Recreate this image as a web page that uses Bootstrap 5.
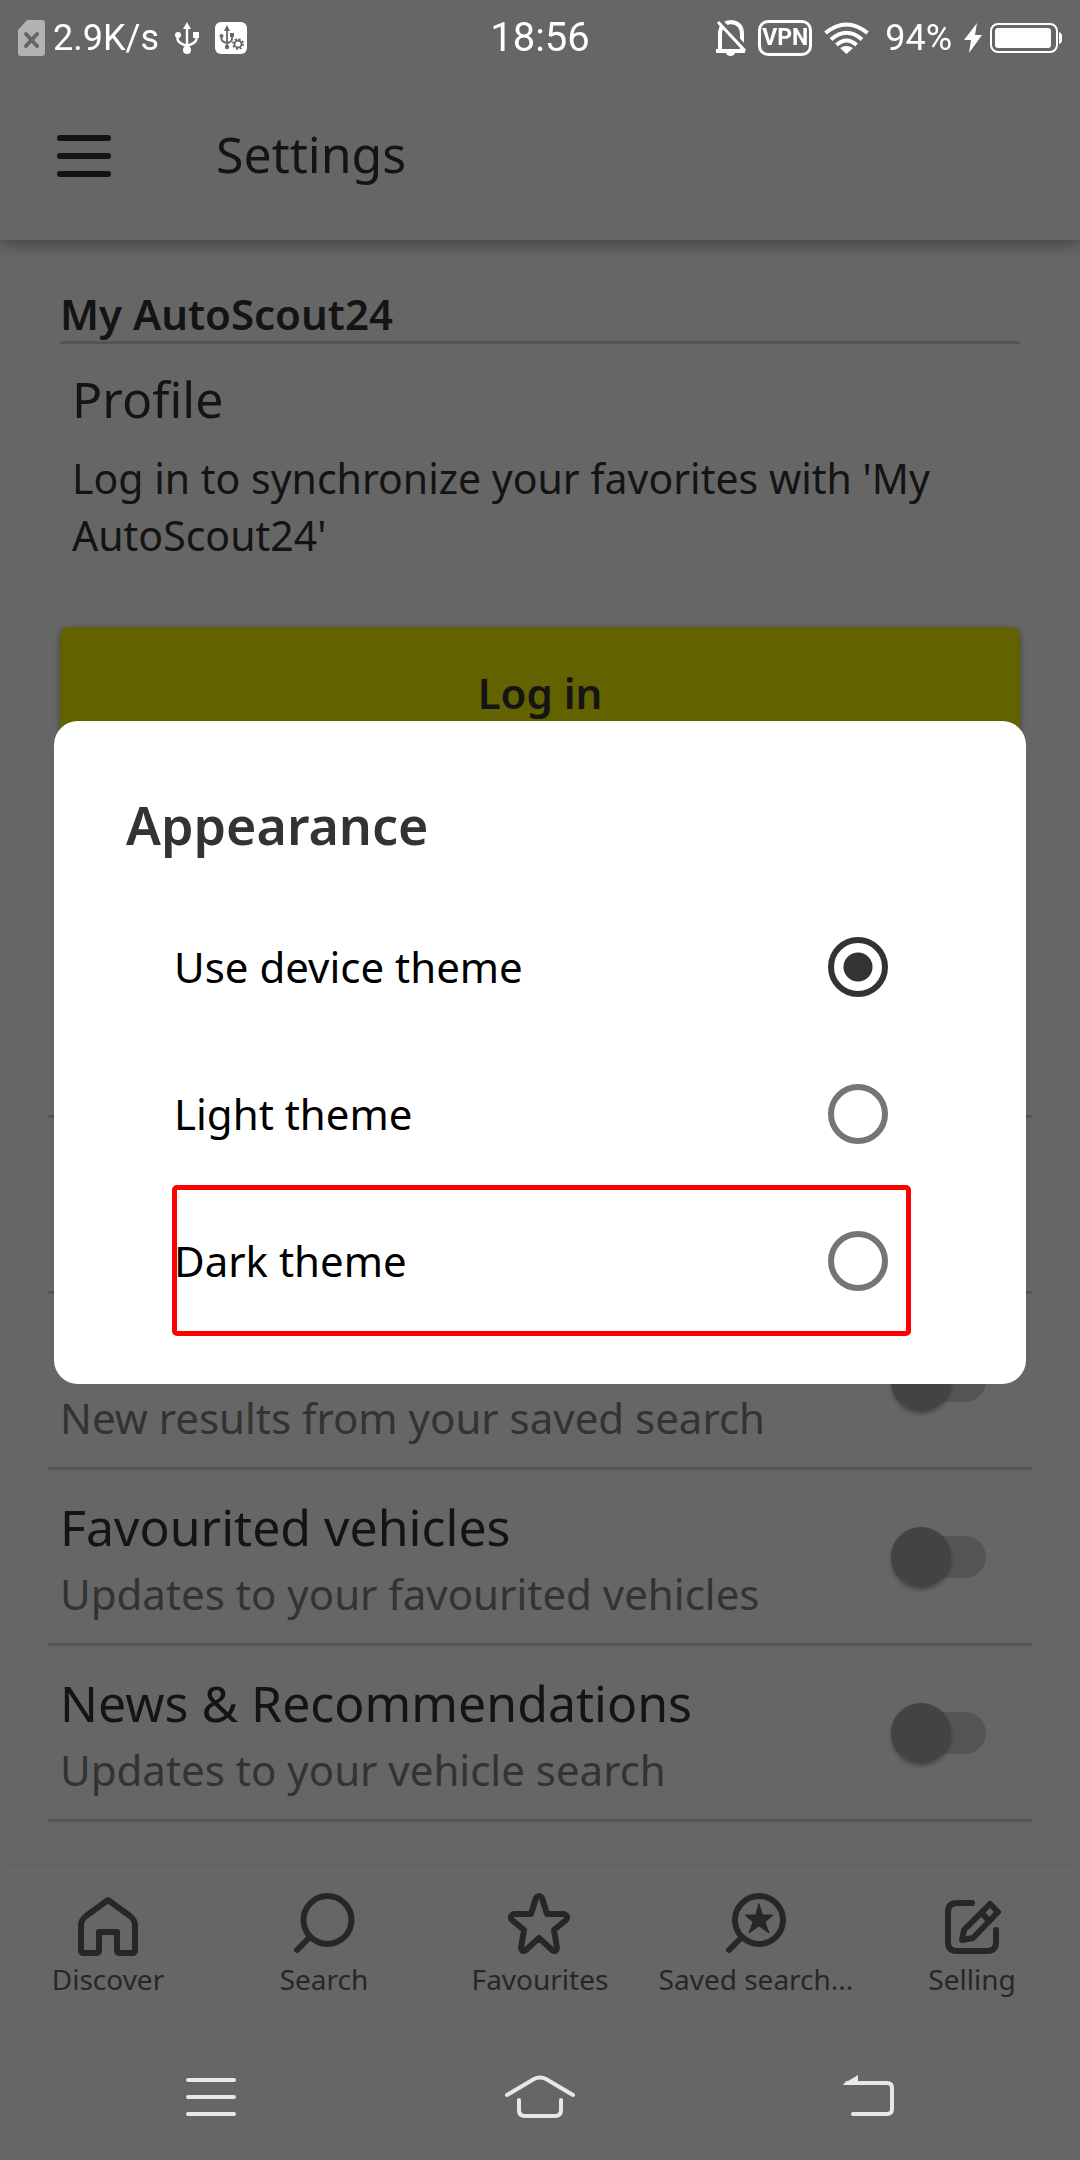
<!DOCTYPE html>
<html lang="en">
<head>
<meta charset="utf-8">
<meta name="viewport" content="width=device-width, initial-scale=1">
<title>Settings</title>
<link href="https://cdn.jsdelivr.net/npm/bootstrap@5.3.0/dist/css/bootstrap.min.css" rel="stylesheet">
<style>
  body { font-family: "Noto Sans", "Open Sans", sans-serif; font-size: 42px; line-height: 57px; color: #333; background: #fff; }
  svg { display: block; flex: none; }
  .modal-backdrop { --bs-backdrop-opacity: .6; opacity: .6; width: 100%; height: 100%; }

  /* system bars stay above the dimmed page */
  .sys { position: relative; z-index: 1060; color: #fff; font-family: Roboto, sans-serif; }
  .status { height: 76px; padding: 0 18px; font-size: 36px; line-height: 40px; }
  .clock { font-size: 40px; }
  .vpn { width: 54px; height: 36px; border: 3px solid #fff; border-radius: 10px; font-size: 23px; line-height: 30px; font-weight: 700; text-align: center; }
  .sysnav { height: 126px; padding: 0 186px; color: #e8e8e8; }
  .plain { background: none; border: 0; padding: 0; color: inherit; }

  .topbar { height: 164px; padding: 0 57px 4px; gap: 105px; box-shadow: 0 4px 16px rgba(0,0,0,.36); clip-path: inset(0 0 -24px 0); }
  .big { font-size: 50px; line-height: 68px; font-weight: 400; }
  .content-area { padding: 46px 60px 0; }
  .section-head { font-size: 42px; line-height: 55px; font-weight: 600; border-bottom: 3px solid #d5d5d5; }
  .profile { padding: 21px 12px 63px; }
  .profile p { margin-top: 17px; font-size: 41px; }
  .login { height: 135px; padding-bottom: 10px; background: #f5f500; color: #333; border: 0; border-radius: 9px; font-size: 42px; font-weight: 600; box-shadow: 0 2px 6px rgba(0,0,0,.4); }
  .options { margin: 353px -12px 0; border-bottom: 3px solid #d5d5d5; }
  .option { height: 176px; padding: 22px 46px 21px 12px; border-top: 3px solid #d5d5d5; }
  .option small { font-size: 42px; line-height: 57px; color: #808080; }
  .toggle { appearance: none; position: relative; flex: none; width: 95px; height: 60px; margin: 0; }
  .toggle::before { content: ""; position: absolute; inset: 9px 0 9px 9px; border-radius: 21px; background: #d5d5d5; }
  .toggle::after { content: ""; position: absolute; left: 0; top: 0; width: 60px; height: 60px; border-radius: 50%; background: #a8a8a8; box-shadow: 0 3px 4px rgba(0,0,0,.3); }

  .tabs { height: 168px; padding-top: 23px; font-size: 28px; line-height: 36px; box-shadow: 0 -2px 10px rgba(0,0,0,.06); clip-path: inset(-16px 0 0 0); background: #fff; }
  .tabs a { color: #626262; }

  .modal { padding: 0 54px 55px; }
  .sheet { border-radius: 24px; padding: 70px 117px 50px 72px; background: #fff; }
  .sheet h2 { font-size: 52px; line-height: 68px; font-weight: 600; color: #333; margin-bottom: 34px; }
  .choices { padding-left: 48px; }
  .choice { height: 147px; padding-right: 21px; color: #000; }
  .choice input { appearance: none; width: 60px; height: 60px; margin: 0; border: 6px solid #757575; border-radius: 50%; }
  .choice input:checked { border-color: #333; background: radial-gradient(circle, #333 14px, #fff 15px); }
  .marked { outline: 5px solid #f00; outline-offset: -3px; border-radius: 3px; }
</style>
</head>
<body class="d-flex flex-column min-vh-100">

<div class="sys status row g-0 align-items-center">
  <div class="col d-flex align-items-center">
    <svg width="27" height="36" viewBox="0 0 27 36"><path d="M9 0H24Q27 0 27 3V33Q27 36 24 36H3Q0 36 0 33V10Z" fill="#b2b2b2"/><path d="M8 14L19 26M19 14L8 26" stroke="#666" stroke-width="4" stroke-linecap="round"/></svg>
    <span class="ms-2">2.9K/s</span>
    <svg class="ms-3" width="24" height="32" viewBox="0 0 24 32" fill="none" stroke="#fff" stroke-width="2.4"><path d="M12 5V28M2.500 13V17Q3 21 12 24M21.500 13V17Q21 21 12 24"/><g fill="#fff" stroke="none"><path d="M12 0L16 7H8Z"/><circle cx="12" cy="28" r="4"/><circle cx="3" cy="13" r="3"/><rect x="18" y="10" width="6" height="6"/></g></svg>
    <svg class="ms-3" width="32" height="32" viewBox="0 0 32 32"><rect width="32" height="32" rx="6" fill="#fff"/><g fill="none" stroke="#666" stroke-width="1.800"><path d="M12 6V25M6.500 14V17Q7 20 12 21M17 13V17Q17 20 12 21"/><circle cx="23" cy="22" r="3.500"/><circle cx="23" cy="22" r="5" stroke-dasharray="2 1.930"/></g><g fill="#666"><path d="M12 3L15 9H9Z"/><circle cx="12" cy="25" r="2.200"/><circle cx="6.500" cy="14" r="2"/><rect x="15" y="11" width="4" height="4"/></g></svg>
  </div>
  <div class="col-auto clock">18:56</div>
  <div class="col d-flex align-items-center justify-content-end">
    <svg class="me-1" width="30" height="36" viewBox="0 0 30 36"><path d="M4 31V14Q4 3 15 2Q26 3 26 14V31M0 31H29" fill="none" stroke="#fff" stroke-width="4"/><path d="M10 33H19Q18 36 14.500 36Q11 36 10 33Z" fill="#fff"/><path d="M4 0L30 28" stroke="#666" stroke-width="4"/><path d="M2 2L29 31" stroke="#fff" stroke-width="3"/></svg>
    <span class="vpn ms-2 me-2">VPN</span>
    <svg class="ms-1" width="45" height="32" viewBox="0 0 45 32" fill="none" stroke="#fff" stroke-width="4"><path d="M1.500 11Q22.500-6 43.500 11M7 17.500Q22.500 4 38 17.500M12.500 23Q22.500 14 32.500 23"/><path d="M16 26Q22.500 22 29 26L22.500 32Z" fill="#fff" stroke="none"/></svg>
    <span class="ms-3 me-2">94%</span>
    <svg class="ms-1 me-2" width="18" height="30" viewBox="0 0 18 30"><path d="M13 0L0 17H7L5 30L18 12H11Z" fill="#fff"/></svg>
    <svg width="72" height="32" viewBox="0 0 72 32"><rect x="1" y="2" width="66" height="28" rx="7" fill="none" stroke="#fff" stroke-width="2"/><rect x="5" y="6" width="56" height="20" rx="3" fill="#fff"/><path d="M69 10Q72 11 72 14V18Q72 21 69 22Z" fill="#fff"/></svg>
  </div>
</div>

<header class="topbar d-flex align-items-center">
  <button type="button" class="plain" aria-label="Menu">
    <svg width="54" height="42" viewBox="0 0 54 42" stroke="#333" stroke-width="6" stroke-linecap="round"><path d="M3 3H51M3 21H51M3 39H51"/></svg>
  </button>
  <h1 class="big m-0 pb-1">Settings</h1>
</header>

<main class="content-area flex-grow-1">
  <h2 class="section-head m-0">My AutoScout24</h2>
  <div class="profile">
    <h3 class="big m-0">Profile</h3>
    <p class="mb-0">Log in to synchronize your favorites with 'My AutoScout24'</p>
  </div>
  <button type="button" class="btn login w-100">Log in</button>

  <div class="options">
    <div class="option"></div>
    <label class="option d-flex justify-content-between align-items-center">
      <small class="align-self-end">New results from your saved search</small>
      <input type="checkbox" role="switch" class="toggle">
    </label>
    <label class="option d-flex justify-content-between align-items-center">
      <span class="d-flex flex-column gap-1"><span class="big">Favourited vehicles</span><small>Updates to your favourited vehicles</small></span>
      <input type="checkbox" role="switch" class="toggle">
    </label>
    <label class="option d-flex justify-content-between align-items-center">
      <span class="d-flex flex-column gap-1"><span class="big">News &amp; Recommendations</span><small>Updates to your vehicle search</small></span>
      <input type="checkbox" role="switch" class="toggle">
    </label>
  </div>
</main>

<nav class="tabs row g-0 row-cols-5 text-center">
  <a href="#" class="col d-flex flex-column align-items-center text-decoration-none">
    <svg width="72" height="72" viewBox="0 0 72 72" fill="none" stroke="currentColor" stroke-width="6" stroke-linejoin="round"><path d="M36 11L58 27Q63 31 63 36V61Q63 64 60 64H48Q45 64 45 61V43H27V61Q27 64 24 64H12Q9 64 9 61V36Q9 31 14 27Z"/></svg>
    <span>Discover</span>
  </a>
  <a href="#" class="col d-flex flex-column align-items-center text-decoration-none">
    <svg width="72" height="72" viewBox="0 0 72 72" fill="none" stroke="currentColor" stroke-width="6" stroke-linecap="round"><circle cx="39.500" cy="31" r="24"/><path d="M22 48L9 61"/></svg>
    <span>Search</span>
  </a>
  <a href="#" class="col d-flex flex-column align-items-center text-decoration-none">
    <svg width="72" height="72" viewBox="0 0 72 72" fill="none" stroke="currentColor" stroke-width="6" stroke-linejoin="round"><path d="M32 9Q35 5 38 9L43 25H60Q65 27 62 31L50 41L53 59Q52 64 48 61L35 49L22 61Q18 64 17 59L20 41L8 31Q5 27 10 25H27Z"/></svg>
    <span>Favourites</span>
  </a>
  <a href="#" class="col d-flex flex-column align-items-center text-decoration-none">
    <svg width="72" height="72" viewBox="0 0 72 72" fill="none" stroke="currentColor" stroke-width="6" stroke-linecap="round"><circle cx="39" cy="31" r="24"/><path d="M22 48L9 61"/><path d="M39 15L42.500 26H53L45 33L49 44L39 37L29 44L33 33L25 26H35.500Z" fill="currentColor" stroke-width="1" stroke-linejoin="round"/></svg>
    <span>Saved search...</span>
  </a>
  <a href="#" class="col d-flex flex-column align-items-center text-decoration-none">
    <svg width="72" height="72" viewBox="0 0 72 72" fill="none" stroke="currentColor" stroke-width="6" stroke-linecap="round" stroke-linejoin="round"><path d="M36 14H21Q12 14 12 23V53Q12 62 21 62H51Q60 62 60 53V41"/><path d="M54 15L62 23L37 49L26 51L28 41Z" stroke-width="6"/><path d="M46 24L53 32" stroke-width="6"/></svg>
    <span>Selling</span>
  </a>
</nav>

<div class="sys sysnav d-flex align-items-center justify-content-between">
  <button type="button" class="plain" aria-label="Recent apps"><svg width="50" height="44" viewBox="0 0 50 44" stroke="currentColor" stroke-width="4" stroke-linecap="round"><path d="M2 5H48M2 22H48M2 39H48"/></svg></button>
  <button type="button" class="plain" aria-label="Home"><svg width="70" height="44" viewBox="0 0 70 44" fill="none" stroke="currentColor" stroke-width="4" stroke-linecap="round"><path d="M2 20L29 4Q35 1 41 4L68 20M14 25V35Q14 41 20 41H50Q56 41 56 35V25"/></svg></button>
  <button type="button" class="plain" aria-label="Back"><svg width="51" height="44" viewBox="0 0 51 44" fill="none" stroke="currentColor" stroke-width="4" stroke-linecap="round"><path d="M4 8H44Q49 8 49 13V34Q49 39 44 39H10"/><path d="M0 9L15 0V10H1Z" fill="currentColor" stroke="none"/></svg></button>
</div>

<div class="modal-backdrop show"></div>
<div class="modal d-flex align-items-center" role="dialog" aria-labelledby="appearance">
  <form class="sheet w-100">
    <h2 id="appearance">Appearance</h2>
    <div class="choices">
      <label class="choice d-flex align-items-center justify-content-between">Use device theme<input type="radio" name="theme" checked></label>
      <label class="choice d-flex align-items-center justify-content-between">Light theme<input type="radio" name="theme"></label>
      <label class="choice marked d-flex align-items-center justify-content-between">Dark theme<input type="radio" name="theme"></label>
    </div>
  </form>
</div>

<script src="https://cdn.jsdelivr.net/npm/bootstrap@5.3.0/dist/js/bootstrap.bundle.min.js"></script>
</body>
</html>
